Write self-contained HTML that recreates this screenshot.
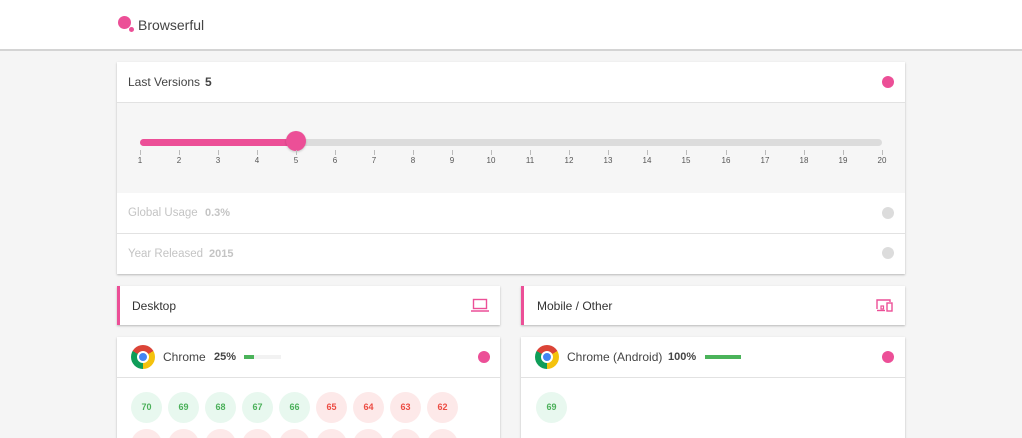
<!DOCTYPE html>
<html><head><meta charset="utf-8"><style>
*{box-sizing:border-box;margin:0;padding:0}
html,body{width:1022px;height:438px;overflow:hidden}
body{background:#f5f5f5;font-family:"Liberation Sans",sans-serif;color:#444;position:relative}
#w{position:absolute;left:0;top:0;width:1022px;height:438px;overflow:hidden}
.abs{position:absolute}
.hdr{left:0;top:0;width:1022px;height:51px;background:#fff;border-bottom:2px solid #d4d4d4}
.card{background:#fff;box-shadow:0 1px 2px rgba(0,0,0,.25)}
.t{font-size:12px;line-height:14px;white-space:nowrap}
.dot{width:12px;height:12px;border-radius:50%;background:#ec4f97}
.gdot{width:12px;height:12px;border-radius:50%;background:#dcdcdc}
.line{height:1px;background:#e2e2e2}
.tick{width:1px;height:5px;background:#bbb;top:150px}
.lab{font-size:8px;line-height:10px;color:#555;top:156px;width:20px;text-align:center}
.c{width:31px;height:31px;border-radius:50%;font-size:9px;text-align:center;line-height:31px;font-weight:bold}
.g{background:#e8f8ef;color:#4bb05a}
.r{background:#fde9e9;color:#ec4c43}
.chrome{width:24px;height:24px;border-radius:50%;background:conic-gradient(from -60deg,#db4437 0 120deg,#f4c20d 120deg 240deg,#0f9d58 240deg 360deg)}
.chrome::after{content:"";position:absolute;left:6px;top:6px;width:12px;height:12px;border-radius:50%;background:#4285f4;border:2px solid #fff;box-sizing:border-box}
#clip{position:absolute;left:117px;top:378px;width:383px;height:60px;overflow:hidden}
</style></head><body><div id="w">
<div class="abs hdr"></div>
<div class="abs" style="left:118px;top:16px;width:13px;height:13px;border-radius:50%;background:#ec4f97"></div>
<div class="abs" style="left:129px;top:27px;width:5px;height:5px;border-radius:50%;background:#ec4f97"></div>
<div class="abs t" style="left:138px;top:17px;font-size:14px;line-height:16px;color:#444">Browserful</div>

<div class="abs card" style="left:117px;top:62px;width:788px;height:212px"></div>
<div class="abs t" style="left:128px;top:75px">Last Versions</div>
<div class="abs t" style="left:205px;top:75px;font-weight:bold">5</div>
<div class="abs dot" style="left:882px;top:76px"></div>
<div class="abs line" style="left:117px;top:102px;width:788px"></div>
<div class="abs" style="left:117px;top:103px;width:788px;height:90px;background:#f6f6f6"></div>
<div class="abs" style="left:140px;top:139px;width:742px;height:7px;border-radius:4px;background:#dcdcdc"></div>
<div class="abs" style="left:140px;top:139px;width:156px;height:7px;border-radius:4px;background:#ec4f97"></div>
<div class="abs" style="left:286px;top:131px;width:20px;height:20px;border-radius:50%;background:#ec4f97;box-shadow:0 1px 2px rgba(0,0,0,.2)"></div>
<div class="abs t" style="left:128px;top:206px;color:#c4c4c4;font-size:11.5px">Global Usage</div>
<div class="abs t" style="left:205px;top:206px;color:#c4c4c4;font-size:11px;font-weight:bold">0.3%</div>
<div class="abs gdot" style="left:882px;top:207px"></div>
<div class="abs line" style="left:117px;top:233px;width:788px"></div>
<div class="abs t" style="left:128px;top:247px;color:#c4c4c4;font-size:11.5px">Year Released</div>
<div class="abs t" style="left:209px;top:247px;color:#c4c4c4;font-size:11px;font-weight:bold">2015</div>
<div class="abs gdot" style="left:882px;top:247px"></div>

<div class="abs card" style="left:117px;top:286px;width:383px;height:39px;border-left:3px solid #ec4f97"></div>
<div class="abs t" style="left:132px;top:299px;color:#333">Desktop</div>
<svg class="abs" style="left:471px;top:297px" width="18" height="16" viewBox="0 0 18 16"><rect x="2.5" y="2.5" width="13" height="9" fill="none" stroke="#ec4f97" stroke-width="1.4"/><line x1="0" y1="14" x2="18" y2="14" stroke="#ec4f97" stroke-width="1.4"/></svg>
<div class="abs card" style="left:521px;top:286px;width:384px;height:39px;border-left:3px solid #ec4f97"></div>
<div class="abs t" style="left:537px;top:299px;color:#333">Mobile / Other</div>
<svg class="abs" style="left:876px;top:298px" width="18" height="15" viewBox="0 0 18 15"><path d="M1 11V2h13v2" fill="none" stroke="#ec4f97" stroke-width="1.4"/><line x1="1" y1="12.5" x2="9" y2="12.5" stroke="#ec4f97" stroke-width="1.4"/><rect x="11" y="5" width="5" height="8" fill="none" stroke="#ec4f97" stroke-width="1.4"/><rect x="5" y="8" width="2.5" height="3" fill="none" stroke="#ec4f97" stroke-width="1.2"/></svg>

<div class="abs card" style="left:117px;top:337px;width:383px;height:101px"></div>
<div class="abs chrome" style="left:131px;top:345px"></div>
<div class="abs t" style="left:163px;top:350px">Chrome</div>
<div class="abs t" style="left:214px;top:350px;font-weight:bold;font-size:11px">25%</div>
<div class="abs" style="left:244px;top:355px;width:37px;height:4px;background:#f2f2f2"></div>
<div class="abs" style="left:244px;top:355px;width:10px;height:4px;background:#4bb35a"></div>
<div class="abs dot" style="left:478px;top:351px"></div>
<div class="abs line" style="left:117px;top:377px;width:383px"></div>

<div class="abs card" style="left:521px;top:337px;width:384px;height:101px"></div>
<div class="abs chrome" style="left:535px;top:345px"></div>
<div class="abs t" style="left:567px;top:350px">Chrome (Android)</div>
<div class="abs t" style="left:668px;top:350px;font-weight:bold;font-size:11px">100%</div>
<div class="abs" style="left:705px;top:355px;width:36px;height:4px;background:#4bb35a"></div>
<div class="abs dot" style="left:882px;top:351px"></div>
<div class="abs line" style="left:521px;top:377px;width:384px"></div>
<div class="abs c g" style="left:536px;top:392px">69</div>

<div class="abs tick" style="left:140px"></div><div class="abs lab" style="left:130px">1</div>
<div class="abs tick" style="left:179px"></div><div class="abs lab" style="left:169px">2</div>
<div class="abs tick" style="left:218px"></div><div class="abs lab" style="left:208px">3</div>
<div class="abs tick" style="left:257px"></div><div class="abs lab" style="left:247px">4</div>
<div class="abs tick" style="left:296px"></div><div class="abs lab" style="left:286px">5</div>
<div class="abs tick" style="left:335px"></div><div class="abs lab" style="left:325px">6</div>
<div class="abs tick" style="left:374px"></div><div class="abs lab" style="left:364px">7</div>
<div class="abs tick" style="left:413px"></div><div class="abs lab" style="left:403px">8</div>
<div class="abs tick" style="left:452px"></div><div class="abs lab" style="left:442px">9</div>
<div class="abs tick" style="left:491px"></div><div class="abs lab" style="left:481px">10</div>
<div class="abs tick" style="left:530px"></div><div class="abs lab" style="left:520px">11</div>
<div class="abs tick" style="left:569px"></div><div class="abs lab" style="left:559px">12</div>
<div class="abs tick" style="left:608px"></div><div class="abs lab" style="left:598px">13</div>
<div class="abs tick" style="left:647px"></div><div class="abs lab" style="left:637px">14</div>
<div class="abs tick" style="left:686px"></div><div class="abs lab" style="left:676px">15</div>
<div class="abs tick" style="left:726px"></div><div class="abs lab" style="left:716px">16</div>
<div class="abs tick" style="left:765px"></div><div class="abs lab" style="left:755px">17</div>
<div class="abs tick" style="left:804px"></div><div class="abs lab" style="left:794px">18</div>
<div class="abs tick" style="left:843px"></div><div class="abs lab" style="left:833px">19</div>
<div class="abs tick" style="left:882px"></div><div class="abs lab" style="left:872px">20</div>

<div id="clip">
<div class="abs c g" style="left:14px;top:14px">70</div>
<div class="abs c g" style="left:51px;top:14px">69</div>
<div class="abs c g" style="left:88px;top:14px">68</div>
<div class="abs c g" style="left:125px;top:14px">67</div>
<div class="abs c g" style="left:162px;top:14px">66</div>
<div class="abs c r" style="left:199px;top:14px">65</div>
<div class="abs c r" style="left:236px;top:14px">64</div>
<div class="abs c r" style="left:273px;top:14px">63</div>
<div class="abs c r" style="left:310px;top:14px">62</div>
<div class="abs c r" style="left:14px;top:51px"></div>
<div class="abs c r" style="left:51px;top:51px"></div>
<div class="abs c r" style="left:88px;top:51px"></div>
<div class="abs c r" style="left:125px;top:51px"></div>
<div class="abs c r" style="left:162px;top:51px"></div>
<div class="abs c r" style="left:199px;top:51px"></div>
<div class="abs c r" style="left:236px;top:51px"></div>
<div class="abs c r" style="left:273px;top:51px"></div>
<div class="abs c r" style="left:310px;top:51px"></div>
</div>
</div></body></html>
